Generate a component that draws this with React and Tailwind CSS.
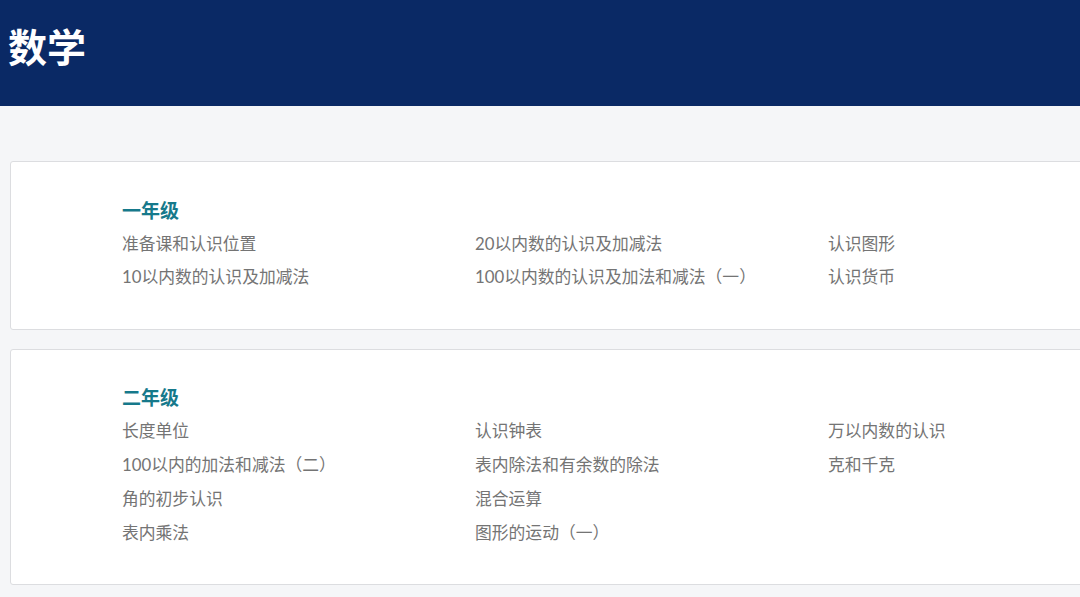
export default function App() {
  const font = { fontFamily: 'Lato, "Noto Sans CJK SC", sans-serif' };
  const grades = [
    {
      title: "一年级",
      cols: [
        ["准备课和认识位置", "10以内数的认识及加减法"],
        ["20以内数的认识及加减法", "100以内数的认识及加法和减法（一）"],
        ["认识图形", "认识货币"],
      ],
    },
    {
      title: "二年级",
      cols: [
        ["长度单位", "100以内的加法和减法（二）", "角的初步认识", "表内乘法"],
        ["认识钟表", "表内除法和有余数的除法", "混合运算", "图形的运动（一）"],
        ["万以内数的认识", "克和千克"],
      ],
    },
  ];
  return (
    <div className="w-[1080px] h-[597px] overflow-hidden bg-[#f5f6f8]" style={font}>
      <div className="h-[106px] bg-[#0a2965] pt-[23px] px-[8px]">
        <h1 className="text-[39px] leading-[48px] font-bold text-white">数学</h1>
      </div>
      <div className="pt-[55px] pl-[10px] flex flex-col gap-[19px]">
        {grades.map((g) => (
          <div
            key={g.title}
            className="w-[1120px] bg-white border border-[#dcdde0] rounded-[3px] pt-[32.5px] pb-[35px] pl-[111px]"
          >
            <div className="text-[19px] leading-[32px] font-bold text-[#16798b]">{g.title}</div>
            <div className="grid grid-cols-[353px_353px_353px]">
              {g.cols.map((c, i) => (
                <div key={i} className="flex flex-col">
                  {c.map((t) => (
                    <div key={t} className="text-[16.8px] leading-[33.7px] text-[#747474]">
                      {t}
                    </div>
                  ))}
                </div>
              ))}
            </div>
          </div>
        ))}
      </div>
    </div>
  );
}
